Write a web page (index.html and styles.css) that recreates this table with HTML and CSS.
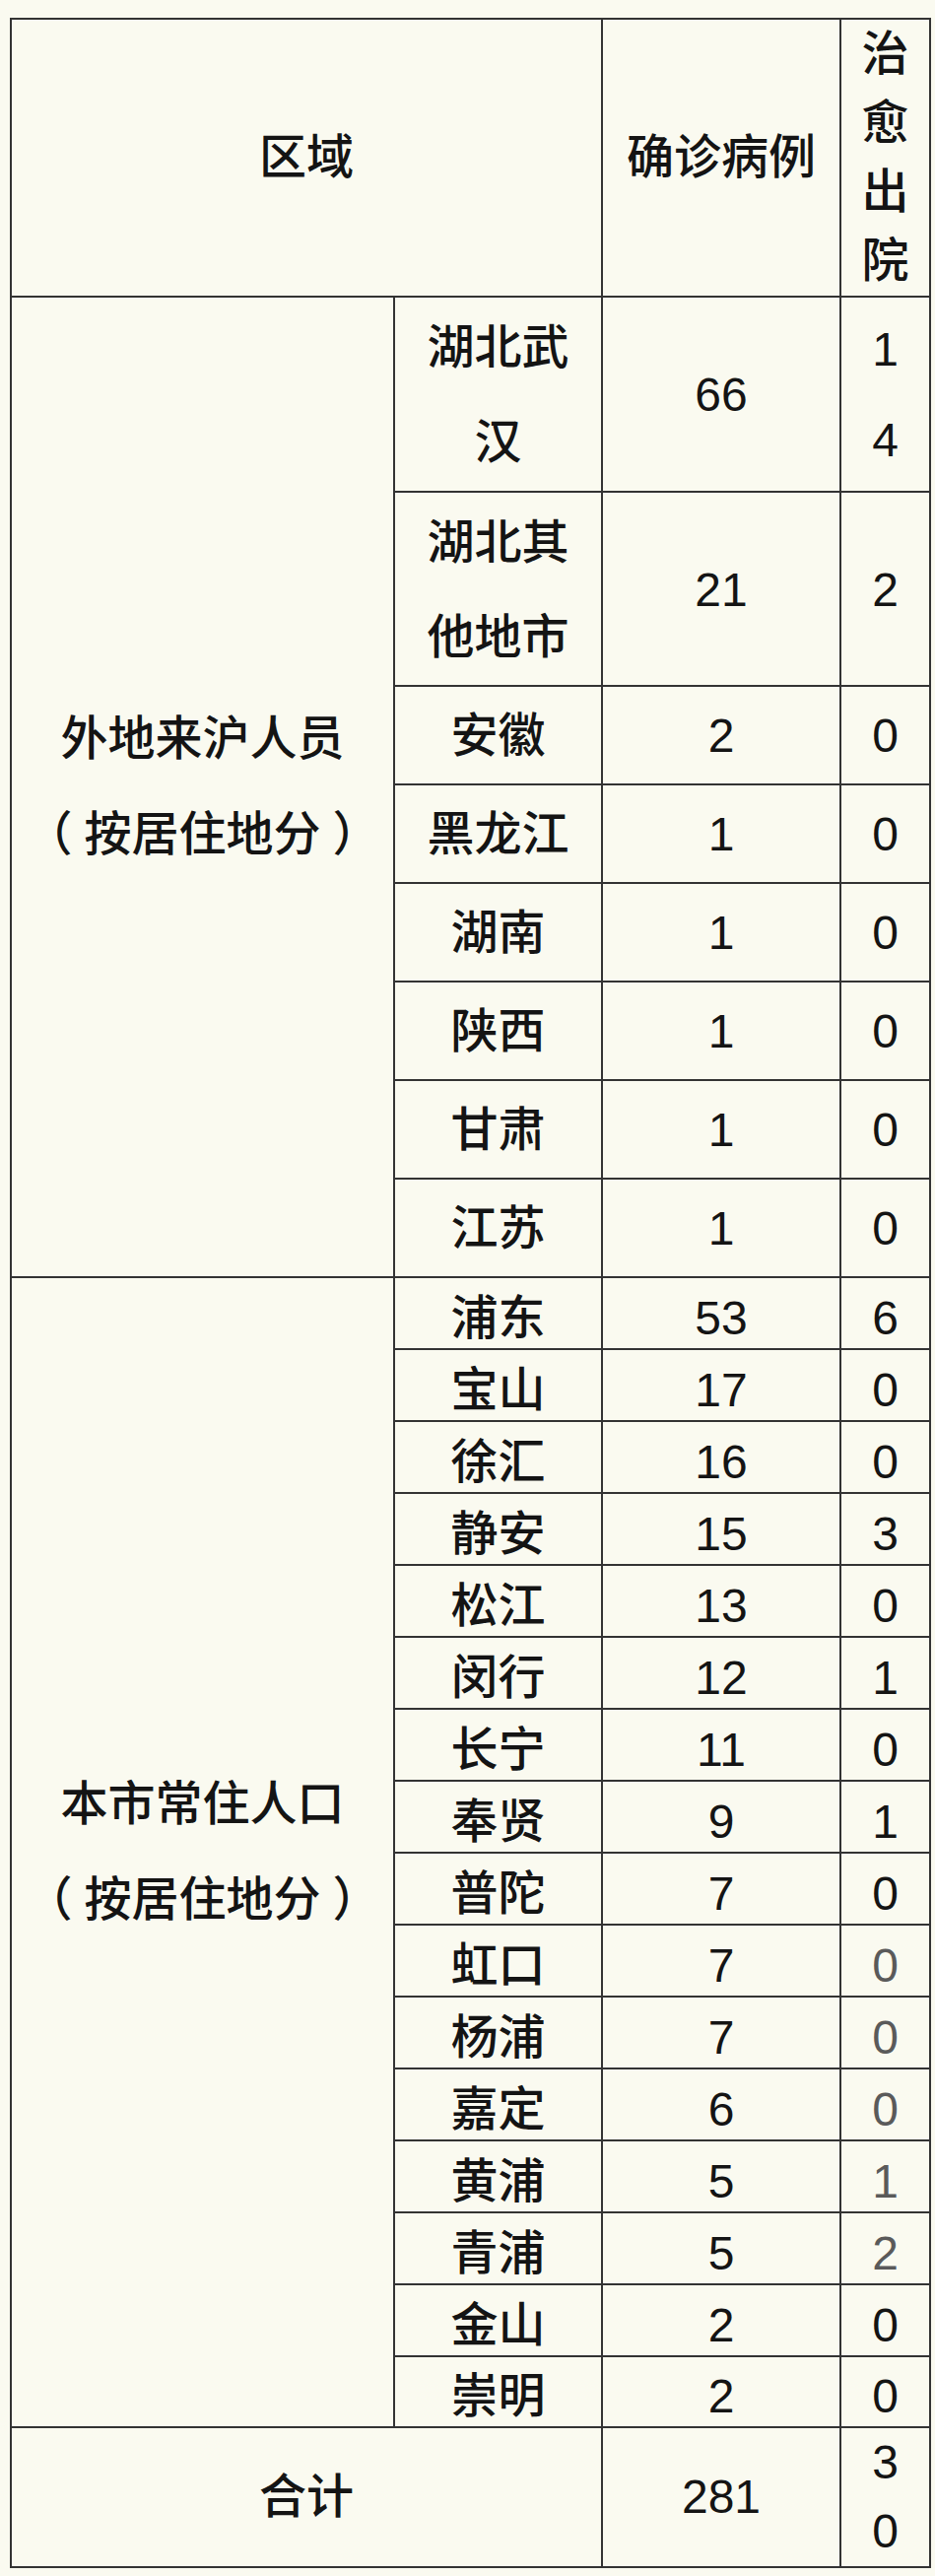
FILE: index.html
```html
<!DOCTYPE html>
<html lang="zh-CN">
<head>
<meta charset="utf-8">
<title>确诊病例分布</title>
<link rel="stylesheet" href="styles.css">
</head>
<body>
<table class="stats">
  <colgroup>
    <col class="w-group">
    <col class="w-area">
    <col class="w-cases">
    <col class="w-cured">
  </colgroup>
  <tr class="head">
    <td colspan="2">区域</td>
    <td>确诊病例</td>
    <td class="cured">治愈出院</td>
  </tr>

  <tr class="up h198">
    <td class="group" rowspan="8">外地来沪人员<br><span class="paren">（</span>按居住地分<span class="paren">）</span></td>
    <td class="area">湖北武汉</td>
    <td>66</td>
    <td class="cured">14</td>
  </tr>
  <tr class="up h197">
    <td class="area">湖北其他地市</td>
    <td>21</td>
    <td class="cured">2</td>
  </tr>
  <tr class="up h100"><td class="area">安徽</td><td>2</td><td class="cured">0</td></tr>
  <tr class="up h100"><td class="area">黑龙江</td><td>1</td><td class="cured">0</td></tr>
  <tr class="up h100"><td class="area">湖南</td><td>1</td><td class="cured">0</td></tr>
  <tr class="up h100"><td class="area">陕西</td><td>1</td><td class="cured">0</td></tr>
  <tr class="up h100"><td class="area">甘肃</td><td>1</td><td class="cured">0</td></tr>
  <tr class="up h99"><td class="area">江苏</td><td>1</td><td class="cured">0</td></tr>

  <tr class="low h73">
    <td class="group" rowspan="16">本市常住人口<br><span class="paren">（</span>按居住地分<span class="paren">）</span></td>
    <td class="area">浦东</td><td>53</td><td class="cured">6</td>
  </tr>
  <tr class="low h73"><td class="area">宝山</td><td>17</td><td class="cured">0</td></tr>
  <tr class="low h73"><td class="area">徐汇</td><td>16</td><td class="cured">0</td></tr>
  <tr class="low h73"><td class="area">静安</td><td>15</td><td class="cured">3</td></tr>
  <tr class="low h73"><td class="area">松江</td><td>13</td><td class="cured">0</td></tr>
  <tr class="low h73"><td class="area">闵行</td><td>12</td><td class="cured">1</td></tr>
  <tr class="low h73"><td class="area">长宁</td><td>11</td><td class="cured">0</td></tr>
  <tr class="low h73"><td class="area">奉贤</td><td>9</td><td class="cured">1</td></tr>
  <tr class="low h73"><td class="area">普陀</td><td>7</td><td class="cured">0</td></tr>
  <tr class="low h73"><td class="area">虹口</td><td>7</td><td class="cured faint">0</td></tr>
  <tr class="low h73"><td class="area">杨浦</td><td>7</td><td class="cured faint">0</td></tr>
  <tr class="low h73"><td class="area">嘉定</td><td>6</td><td class="cured faint">0</td></tr>
  <tr class="low h73"><td class="area">黄浦</td><td>5</td><td class="cured faint">1</td></tr>
  <tr class="low h73"><td class="area">青浦</td><td>5</td><td class="cured faint">2</td></tr>
  <tr class="low h73"><td class="area">金山</td><td>2</td><td class="cured">0</td></tr>
  <tr class="low h72"><td class="area">崇明</td><td>2</td><td class="cured">0</td></tr>

  <tr class="total">
    <td colspan="2">合计</td>
    <td>281</td>
    <td class="cured">30</td>
  </tr>
</table>
</body>
</html>
```
FILE: styles.css
```css
html, body {
  margin: 0;
  padding: 0;
  background: #fafaf0;
}

body {
  padding: 18px 0 0 10px;
}

.stats {
  table-layout: fixed;
  width: 935px;
  border-collapse: separate;
  border-spacing: 0;
  border-left: 2px solid #333;
  border-top: 2px solid #333;
  font-family: "Liberation Sans", "Noto Sans CJK SC", sans-serif;
  font-size: 48px;
  font-weight: 500;
  color: #141414;
}

.w-group { width: 389px; }
.w-area { width: 211px; }
.w-cases { width: 242px; }
.w-cured { width: 91px; }

.stats td {
  border-right: 2px solid #333;
  border-bottom: 2px solid #333;
  text-align: center;
  vertical-align: middle;
  padding: 0;
  line-height: 96px;
}

.stats td.area {
  padding-left: 20px;
  padding-right: 20px;
}

.stats td.cured {
  padding-left: 20px;
  padding-right: 20px;
  word-break: break-all;
}

.head { height: 282px; }
.head td { line-height: 70px; }

.up td { padding-top: 2px; }
.up td.cured { line-height: 92px; }

.h198 { height: 198px; }
.h197 { height: 197px; }
.h100 { height: 100px; }
.h99 { height: 99px; }
.h73 { height: 73px; }
.h72 { height: 72px; }

.low td {
  line-height: 60px;
  padding-top: 10px;
}

.stats td.group {
  line-height: 92px;
  padding-top: 0;
}

.paren {
  display: inline-block;
  width: 48px;
  text-align: center;
  font-family: "Noto Sans CJK SC", sans-serif;
  font-feature-settings: "halt";
}

.total { height: 142px; }
.total td { line-height: 70px; }

.faint {
  color: #5a5a5a;
  font-weight: 400;
}
```
